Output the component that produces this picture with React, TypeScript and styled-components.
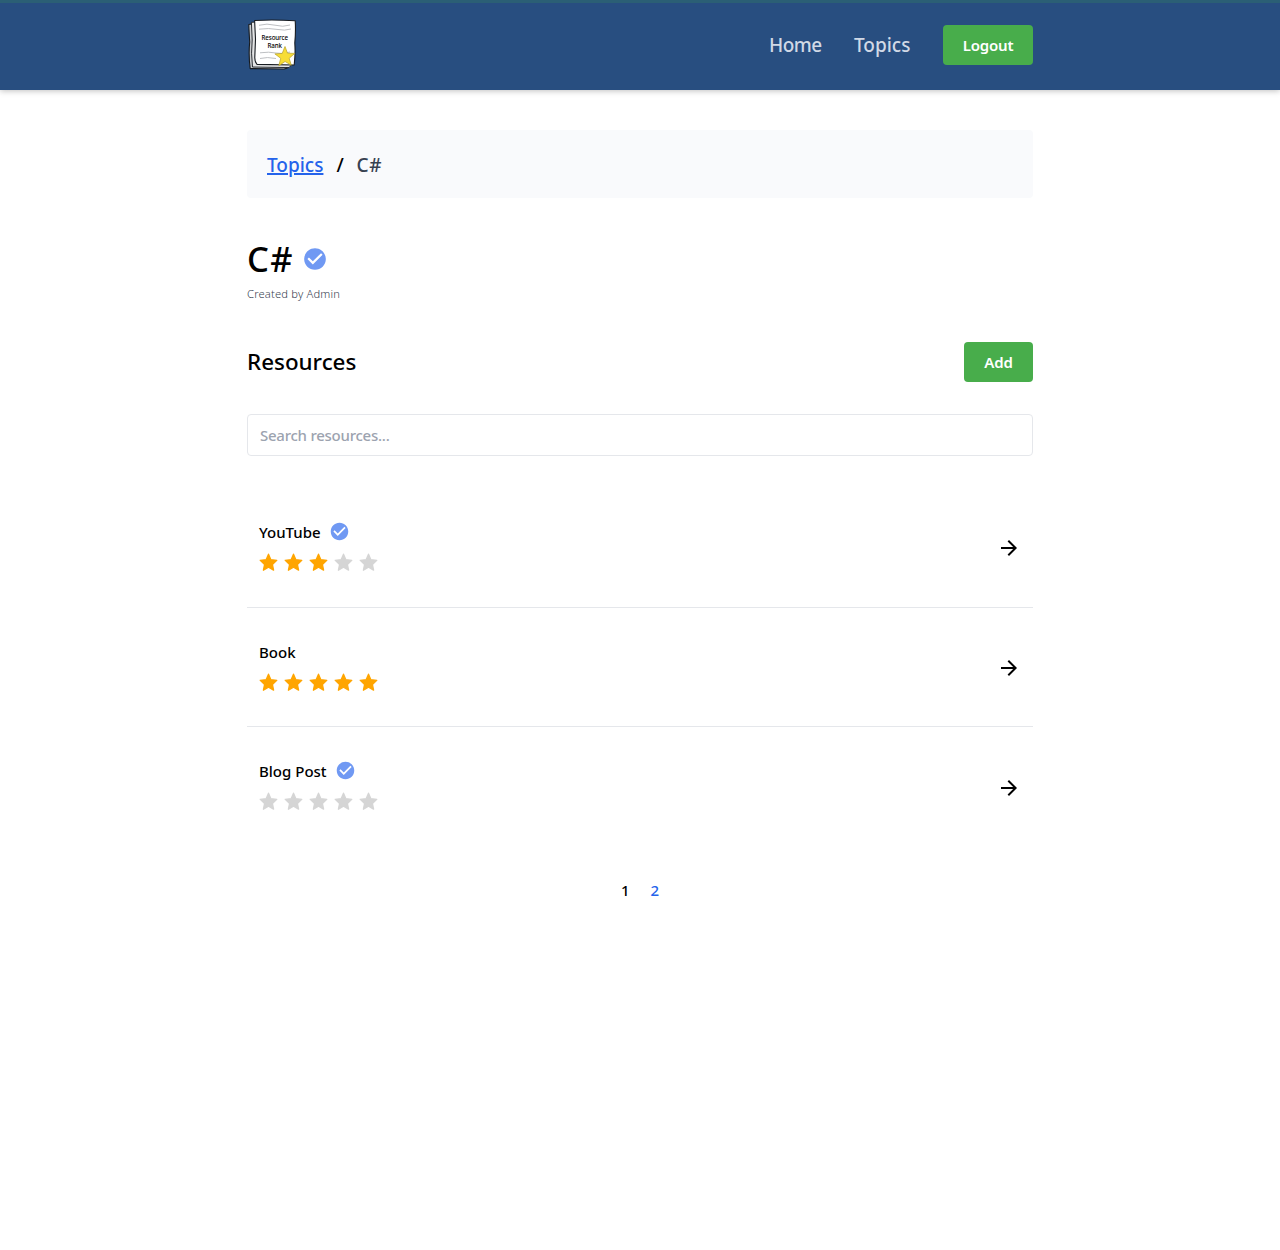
import React from "react";
import styled, { createGlobalStyle } from "styled-components";
import { MdArrowForward, MdCheckCircle } from "react-icons/md";

const GlobalStyle = createGlobalStyle`
  *, *::before, *::after { box-sizing: border-box; }
  body {
    margin: 0;
    background: #fff;
    color: #000;
    font-family: "Noto Sans", "Open Sans", sans-serif;
    font-size: 15px;
    font-weight: 500;
    line-height: 24px;
  }
`;

const Header = styled.header`
  height: 90px;
  background: #284e80;
  border-top: 3px solid #2b5f75;
  box-shadow: 0 1px 6px rgba(0, 0, 0, 0.25);
`;

const Container = styled.div`
  width: 786px;
  margin: 0 auto;
`;

const HeaderInner = styled(Container)`
  height: 84px;
  display: flex;
  align-items: center;
  justify-content: space-between;
`;

const Nav = styled.nav`
  display: flex;
  align-items: center;
  gap: 32px;
`;

const NavLink = styled.a<{ $width: number; $tracking: number }>`
  width: ${(p) => p.$width}px;
  color: #d1d9e6;
  font-size: 19px;
  letter-spacing: ${(p) => p.$tracking}px;
  line-height: 30px;
  white-space: nowrap;
`;

const Button = styled.button<{ $width: number }>`
  width: ${(p) => p.$width}px;
  height: 40px;
  padding: 0;
  border: 0;
  border-radius: 4px;
  background: #48ad4b;
  color: #fff;
  font: 600 15px/24px "Noto Sans", sans-serif;
  letter-spacing: -0.2px;
`;

const Main = styled(Container).attrs({ as: "main" })`
  padding-top: 40px;
`;

const Breadcrumb = styled.nav`
  height: 68px;
  padding: 1px 20px 0;
  display: flex;
  align-items: center;
  gap: 13px;
  border-radius: 4px;
  background: #f9fafc;
  font-size: 19px;
  line-height: 30px;
`;

const Crumb = styled.a`
  color: #2563eb;
  text-decoration: underline;
  text-decoration-thickness: 2px;
  text-underline-offset: 1px;
`;

const Slash = styled.span`
  width: 7px;
`;

const CurrentCrumb = styled.span`
  color: #374151;
  letter-spacing: 0.8px;
`;

const TitleRow = styled.div`
  height: 54px;
  margin-top: 34px;
  display: flex;
  align-items: center;
  gap: 8px;
`;

const Title = styled.h1`
  width: 46.5px;
  margin: 0;
  font-size: 34.5px;
  font-weight: 500;
  line-height: 54px;
  letter-spacing: 1.3px;
`;

const Badge = styled(MdCheckCircle)`
  color: #7099f3;
  flex: none;
`;

const Byline = styled.p`
  margin: -1px 0 0;
  color: #374151;
  font-size: 11.2px;
  font-weight: 300;
  line-height: 18px;
  letter-spacing: 0.17px;
`;

const SectionHead = styled.div`
  height: 40px;
  margin-top: 39px;
  display: flex;
  align-items: center;
  justify-content: space-between;
`;

const SectionTitle = styled.h2`
  margin: 0;
  font-size: 22.4px;
  font-weight: 500;
  line-height: 36px;
`;

const Search = styled.input`
  display: block;
  width: 100%;
  height: 42px;
  margin-top: 32px;
  padding: 0 12px;
  border: 1px solid #e5e7eb;
  border-radius: 4px;
  background: #fff;
  font: 500 15px/24px "Noto Sans", sans-serif;
  letter-spacing: -0.25px;
  &::placeholder { color: #9ca3af; opacity: 1; }
`;

const List = styled.ul`
  margin: 32px 0 0;
  padding: 0;
  list-style: none;
`;

const Item = styled.li<{ $height: number }>`
  height: ${(p) => p.$height}px;
  padding: 0 12px;
  display: flex;
  align-items: center;
  justify-content: space-between;
  border-bottom: 1px solid #e5e7eb;
  &:last-child { border-bottom: 0; }
`;

const ItemBody = styled.div<{ $lift: number }>`
  padding-bottom: ${(p) => p.$lift}px;
`;

const ItemTitle = styled.div<{ $lift: number }>`
  height: 30px;
  padding-bottom: ${(p) => p.$lift}px;
  display: flex;
  align-items: center;
  gap: 8px;
`;

const Stars = styled.div`
  height: 30px;
  display: flex;
  align-items: center;
  gap: 6px;
`;

const Arrow = styled(MdArrowForward)<{ $drop: number }>`
  margin-top: ${(p) => p.$drop}px;
`;

const Pagination = styled.nav`
  margin-top: 30px;
  display: flex;
  justify-content: center;
  gap: 21px;
`;

const Page = styled.a<{ $current?: boolean }>`
  color: ${(p) => (p.$current ? "#000" : "#2563eb")};
`;

const Star = ({ filled }: { filled: boolean }) => (
  <svg width="19" height="19" viewBox="0 0 19 19" fill={filled ? "#ffa500" : "#d5d5d5"}>
    <path
      d="M9.5 1.2 11.9 6.7 17.8 7.3 13.4 11.4 14.6 17.2 9.5 14.3 4.4 17.2 5.6 11.4 1.2 7.3 7.1 6.7Z"
      stroke={filled ? "#ffa500" : "#d5d5d5"}
      strokeWidth="1.3"
      strokeLinejoin="round"
    />
  </svg>
);

const Logo = () => (
  <svg width="50" height="52" viewBox="0 0 50 52">
    <g stroke="#171b20" strokeWidth="1.1" strokeLinejoin="round">
      <path d="M1.8 5.5 6 4.8 40 49.2 37 50 3.2 49.6Q1.4 36 2.7 23Q2 12 1.8 5.5Z" fill="#c9cccf" />
      <path d="M4.4 3.3 10 3 44 46.5 42 48.6 5.5 48Q3.8 34 5.2 21Z" fill="#e4e5e6" strokeWidth=".9" />
      <path d="M7.6 1.5Q27 .5 48.2 1.8Q48.9 12 47.8 24Q48.6 34 47.2 46L10 45.4Q7.6 43 7.8 38L8.5 20Z" fill="#fff" />
    </g>
    <path d="M12 6.3Q20 4 28 6.2T43 6M12 10.2Q22 8.8 30 10.4T44 10M13 33.8Q22 32.5 29 34T43 33M13 39.5Q20 37.6 29 39.5" fill="none" stroke="#b5b8bb" strokeWidth=".9" />
    <text x="14.5" y="20.7" fontFamily="Noto Sans, sans-serif" fontSize="6.2" fontWeight="500" textLength="26.5">Resource</text>
    <text x="20.5" y="28.9" fontFamily="Noto Sans, sans-serif" fontSize="6.2" fontWeight="500" textLength="14.5">Rank</text>
    <path d="m38 27.5 2.5 6.7 7.2.2-5.5 4.9 2.1 7-6.2-3.8-6.3 4.2 1.9-7.4-5.8-4.4 7.3-.5Z" fill="#f7dd36" stroke="#b5a12b" strokeWidth=".7" />
  </svg>
);

const resources = [
  { name: "YouTube", verified: true, rating: 3, height: 120, lift: 1, titleLift: 1, drop: 0 },
  { name: "Book", verified: false, rating: 5, height: 119, lift: 0, titleLift: 0, drop: 1 },
  { name: "Blog Post", verified: true, rating: 0, height: 121, lift: 3, titleLift: 1, drop: 0 },
];

export default function App() {
  return (
    <>
      <GlobalStyle />
      <Header>
        <HeaderInner>
          <Logo />
          <Nav>
            <NavLink $width={53} $tracking={-0.5}>Home</NavLink>
            <NavLink $width={57} $tracking={0}>Topics</NavLink>
            <Button $width={90}>Logout</Button>
          </Nav>
        </HeaderInner>
      </Header>
      <Main>
        <Breadcrumb>
          <Crumb>Topics</Crumb>
          <Slash>/</Slash>
          <CurrentCrumb>C#</CurrentCrumb>
        </Breadcrumb>
        <TitleRow>
          <Title>C#</Title>
          <Badge size={26} />
        </TitleRow>
        <Byline>Created by Admin</Byline>
        <SectionHead>
          <SectionTitle>Resources</SectionTitle>
          <Button $width={69}>Add</Button>
        </SectionHead>
        <Search placeholder="Search resources..." />
        <List>
          {resources.map((r) => (
            <Item key={r.name} $height={r.height}>
              <ItemBody $lift={r.lift}>
                <ItemTitle $lift={r.titleLift}>
                  {r.name}
                  {r.verified && <Badge size={21} />}
                </ItemTitle>
                <Stars>
                  {[0, 1, 2, 3, 4].map((i) => (
                    <Star key={i} filled={i < r.rating} />
                  ))}
                </Stars>
              </ItemBody>
              <Arrow size={24} $drop={r.drop} />
            </Item>
          ))}
        </List>
        <Pagination>
          <Page $current>1</Page>
          <Page>2</Page>
        </Pagination>
      </Main>
    </>
  );
}
